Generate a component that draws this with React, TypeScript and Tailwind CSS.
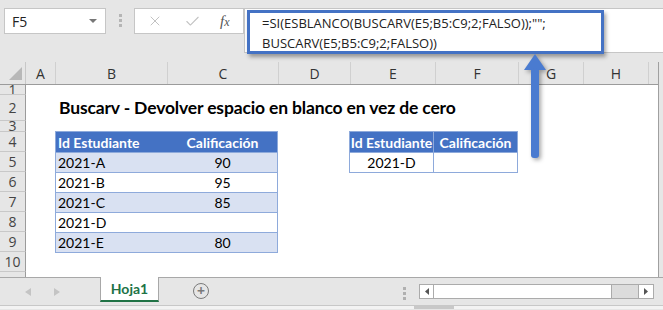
import { X, Check } from "lucide-react"

const cols = [
  { id: "A", w: "w-[30px]" },
  { id: "B", w: "w-[112px]" },
  { id: "C", w: "w-[111px]" },
  { id: "D", w: "w-[72px]" },
  { id: "E", w: "w-[85px]" },
  { id: "F", w: "w-[83px]" },
  { id: "G", w: "w-[65px]" },
  { id: "H", w: "w-[65px]" },
]

const students = [
  { id: "2021-A", grade: "90" },
  { id: "2021-B", grade: "95" },
  { id: "2021-C", grade: "85" },
  { id: "2021-D", grade: "" },
  { id: "2021-E", grade: "80" },
]

const cell = "font-['Lato',sans-serif] text-[14px] text-black"

const RowHead = ({ n, h }: { n: string; h: string }) => (
  <div className={`w-[26px] ${h} shrink-0 bg-[#e6e6e6] border-r border-r-[#9b9b9b] border-b border-b-[#c8c8c8] flex items-center justify-center text-[14px] text-[#444] overflow-hidden leading-none font-['Open_Sans',sans-serif]`}>
    {n}
  </div>
)

const App = () => {
  return (
    <div className="relative w-[663px] h-[310px] bg-[#e6e6e6] flex flex-col overflow-hidden font-['Open_Sans',sans-serif]">
      {/* formula bar */}
      <div className="h-[53px] flex items-start pt-[8px] shrink-0">
        <div className="ml-[4px] w-[102px] h-[26px] bg-white border border-[#c6c6c6] flex items-center justify-between pl-[7px] pr-[8px]">
          <span className="text-[14px] text-[#222]">F5</span>
          <span className="w-0 h-0 border-l-[4px] border-r-[4px] border-t-[4px] border-l-transparent border-r-transparent border-t-[#777]" />
        </div>
        <div className="ml-[13px] mt-[6px] flex flex-col gap-[2px]">
          <span className="w-[3px] h-[3px] bg-[#b5b5b5]" />
          <span className="w-[3px] h-[3px] bg-[#b5b5b5]" />
          <span className="w-[3px] h-[3px] bg-[#b5b5b5]" />
        </div>
        <div className="ml-[12px] w-[110px] h-[26px] bg-white border border-[#c6c6c6] flex items-center">
          <X className="ml-[12px] text-[#c2c2c2]" size={16} strokeWidth={1.5} />
          <Check className="ml-[21px] text-[#c2c2c2]" size={17} strokeWidth={1.5} />
          <span className="ml-[19px] font-['Liberation_Serif',serif] italic text-[15px] text-[#555]">
            f<span className="text-[12px]">x</span>
          </span>
        </div>
        <div className="flex-1 h-[45px] bg-white border border-[#c6c6c6] border-r-0">
          <div className="ml-[2px] mt-[1px] w-[357px] h-[44px] border-[3px] border-[#4472c4] shadow-[2px_3px_4px_rgba(0,0,0,0.35)] pl-[12px] text-[13px] leading-[20px] text-[#222] whitespace-nowrap">
            <div>=SI(ESBLANCO(BUSCARV(E5;B5:C9;2;FALSO));"";</div>
            <div>BUSCARV(E5;B5:C9;2;FALSO))</div>
          </div>
        </div>
      </div>
      <div className="h-[9px] shrink-0" />

      {/* sheet */}
      <div className="w-[659px] h-[216px] bg-white border-r border-r-[#a0a0a0] flex flex-col shrink-0">
        {/* column headers */}
        <div className="h-[23px] flex bg-[#e6e6e6] border-b border-b-[#9b9b9b] shrink-0">
          <div className="w-[26px] shrink-0 border-r border-r-[#c8c8c8] relative">
            <svg className="absolute left-[9px] top-[5px]" width="13" height="13" viewBox="0 0 13 13">
              <polygon points="13,0 13,13 0,13" fill="#b8b8b8" />
            </svg>
          </div>
          {cols.map((c) => (
            <div key={c.id} className={`${c.w} shrink-0 border-r border-r-[#d0d0d0] flex items-center justify-center text-[14px] text-[#333]`}>
              {c.id}
            </div>
          ))}
          <div className="flex-1" />
        </div>

        <div className="flex">
          <div className="flex flex-col">
            <RowHead n="1" h="h-[10px]" />
            <RowHead n="2" h="h-[26px]" />
            <RowHead n="3" h="h-[11px]" />
            {["4", "5", "6", "7", "8", "9", "10"].map((n) => (
              <RowHead key={n} n={n} h="h-[20px]" />
            ))}
            <RowHead n="" h="h-[6px]" />
          </div>

          <div className="flex flex-col">
            <div className="h-[10px]" />
            <div className="h-[26px] flex items-center pl-[33px] font-['Lato',sans-serif] font-bold text-[17.5px] text-black tracking-[-0.15px]">
              Buscarv - Devolver espacio en blanco en vez de cero
            </div>
            <div className="h-[11px]" />
            <div className="flex">
              <div className="w-[29px]" />
              {/* main table */}
              <div className="w-[223px] flex flex-col border border-[#8eaadb] border-t-0 -mt-[1px]">
                <div className={`${cell} h-[21px] flex bg-[#4472c4] text-white font-bold border-t border-t-[#8eaadb]`}>
                  <div className="w-[112px] pl-[2px] flex items-center">Id Estudiante</div>
                  <div className="flex-1 flex items-center justify-center">Calificación</div>
                </div>
                {students.map((s, i) => (
                  <div key={s.id} className={`${cell} h-[20px] flex border-t border-t-[#8eaadb] ${i % 2 === 0 ? "bg-[#d9e1f2]" : "bg-white"}`}>
                    <div className="w-[112px] pl-[2px] flex items-center">{s.id}</div>
                    <div className="flex-1 flex items-center justify-center">{s.grade}</div>
                  </div>
                ))}
              </div>
              <div className="w-[71px]" />
              {/* lookup table */}
              <div className="w-[169px] flex flex-col border border-[#8eaadb] -mt-[1px] self-start">
                <div className={`${cell} h-[20px] flex bg-[#4472c4] text-white font-bold`}>
                  <div className="w-[84px] border-r border-r-[#8eaadb] flex items-center justify-center">Id Estudiante</div>
                  <div className="flex-1 flex items-center justify-center">Calificación</div>
                </div>
                <div className={`${cell} h-[20px] flex bg-white border-t border-t-[#8eaadb]`}>
                  <div className="w-[84px] border-r border-r-[#8eaadb] flex items-center justify-center">2021-D</div>
                  <div className="flex-1" />
                </div>
              </div>
            </div>
          </div>
        </div>
      </div>

      {/* sheet tabs */}
      <div className="h-[28px] flex items-start border-t border-t-[#a8a8a8] shrink-0 -mt-[1px]">
        <svg className="ml-[25px] mt-[10px]" width="6" height="8" viewBox="0 0 6 8">
          <polygon points="6,0 6,8 0,4" fill="#c4c4c4" />
        </svg>
        <svg className="ml-[23px] mt-[10px]" width="6" height="8" viewBox="0 0 6 8">
          <polygon points="0,0 0,8 6,4" fill="#c4c4c4" />
        </svg>
        <div className="ml-[40px] -mt-[1px] w-[59px] h-[25px] bg-white border-x border-x-[#a8a8a8] border-b-[2px] border-b-[#217346] flex items-center justify-center text-[14px] font-bold text-[#217346] font-['Lato',sans-serif]">
          Hoja1
        </div>
        <div className="ml-[34px] mt-[5px] w-[16px] h-[16px] rounded-full border-[1.5px] border-[#7a7a7a] flex items-center justify-center text-[#7a7a7a] text-[14px] leading-none font-bold">
          +
        </div>
        <div className="ml-[194px] mt-[9px] flex flex-col gap-[2px]">
          <span className="w-[3px] h-[3px] bg-[#b0b0b0]" />
          <span className="w-[3px] h-[3px] bg-[#b0b0b0]" />
          <span className="w-[3px] h-[3px] bg-[#b0b0b0]" />
        </div>
        <div className="ml-[13px] mt-[6px] w-[235px] h-[15px] flex border border-[#ababab] bg-[#dcdcdc]">
          <div className="w-[14px] bg-white border-r border-r-[#ababab] flex items-center justify-center">
            <svg width="4" height="7" viewBox="0 0 4 7"><polygon points="4,0 4,7 0,3.5" fill="#555" /></svg>
          </div>
          <div className="w-[178px] bg-white border-r border-r-[#ababab]" />
          <div className="flex-1" />
          <div className="w-[15px] bg-white border-l border-l-[#ababab] flex items-center justify-center">
            <svg width="4" height="7" viewBox="0 0 4 7"><polygon points="0,0 0,7 4,3.5" fill="#555" /></svg>
          </div>
        </div>
      </div>
      <div className="h-[4px] bg-[#f3f3f3] border-t border-t-[#c8c8c8] flex shrink-0">
        <div className="ml-[414px] w-[40px] bg-[#c8c8c8]" />
      </div>

      {/* annotation arrow */}
      <svg className="absolute left-[522px] top-[52px] drop-shadow-[2px_2px_2px_rgba(0,0,0,0.35)]" width="26" height="112" viewBox="0 0 26 112">
        <polygon points="13,2 24,18 2,18" fill="#4a7bd0" />
        <rect x="9" y="16" width="8" height="90" rx="3" fill="#4a7bd0" />
      </svg>
    </div>
  )
}

export default App
